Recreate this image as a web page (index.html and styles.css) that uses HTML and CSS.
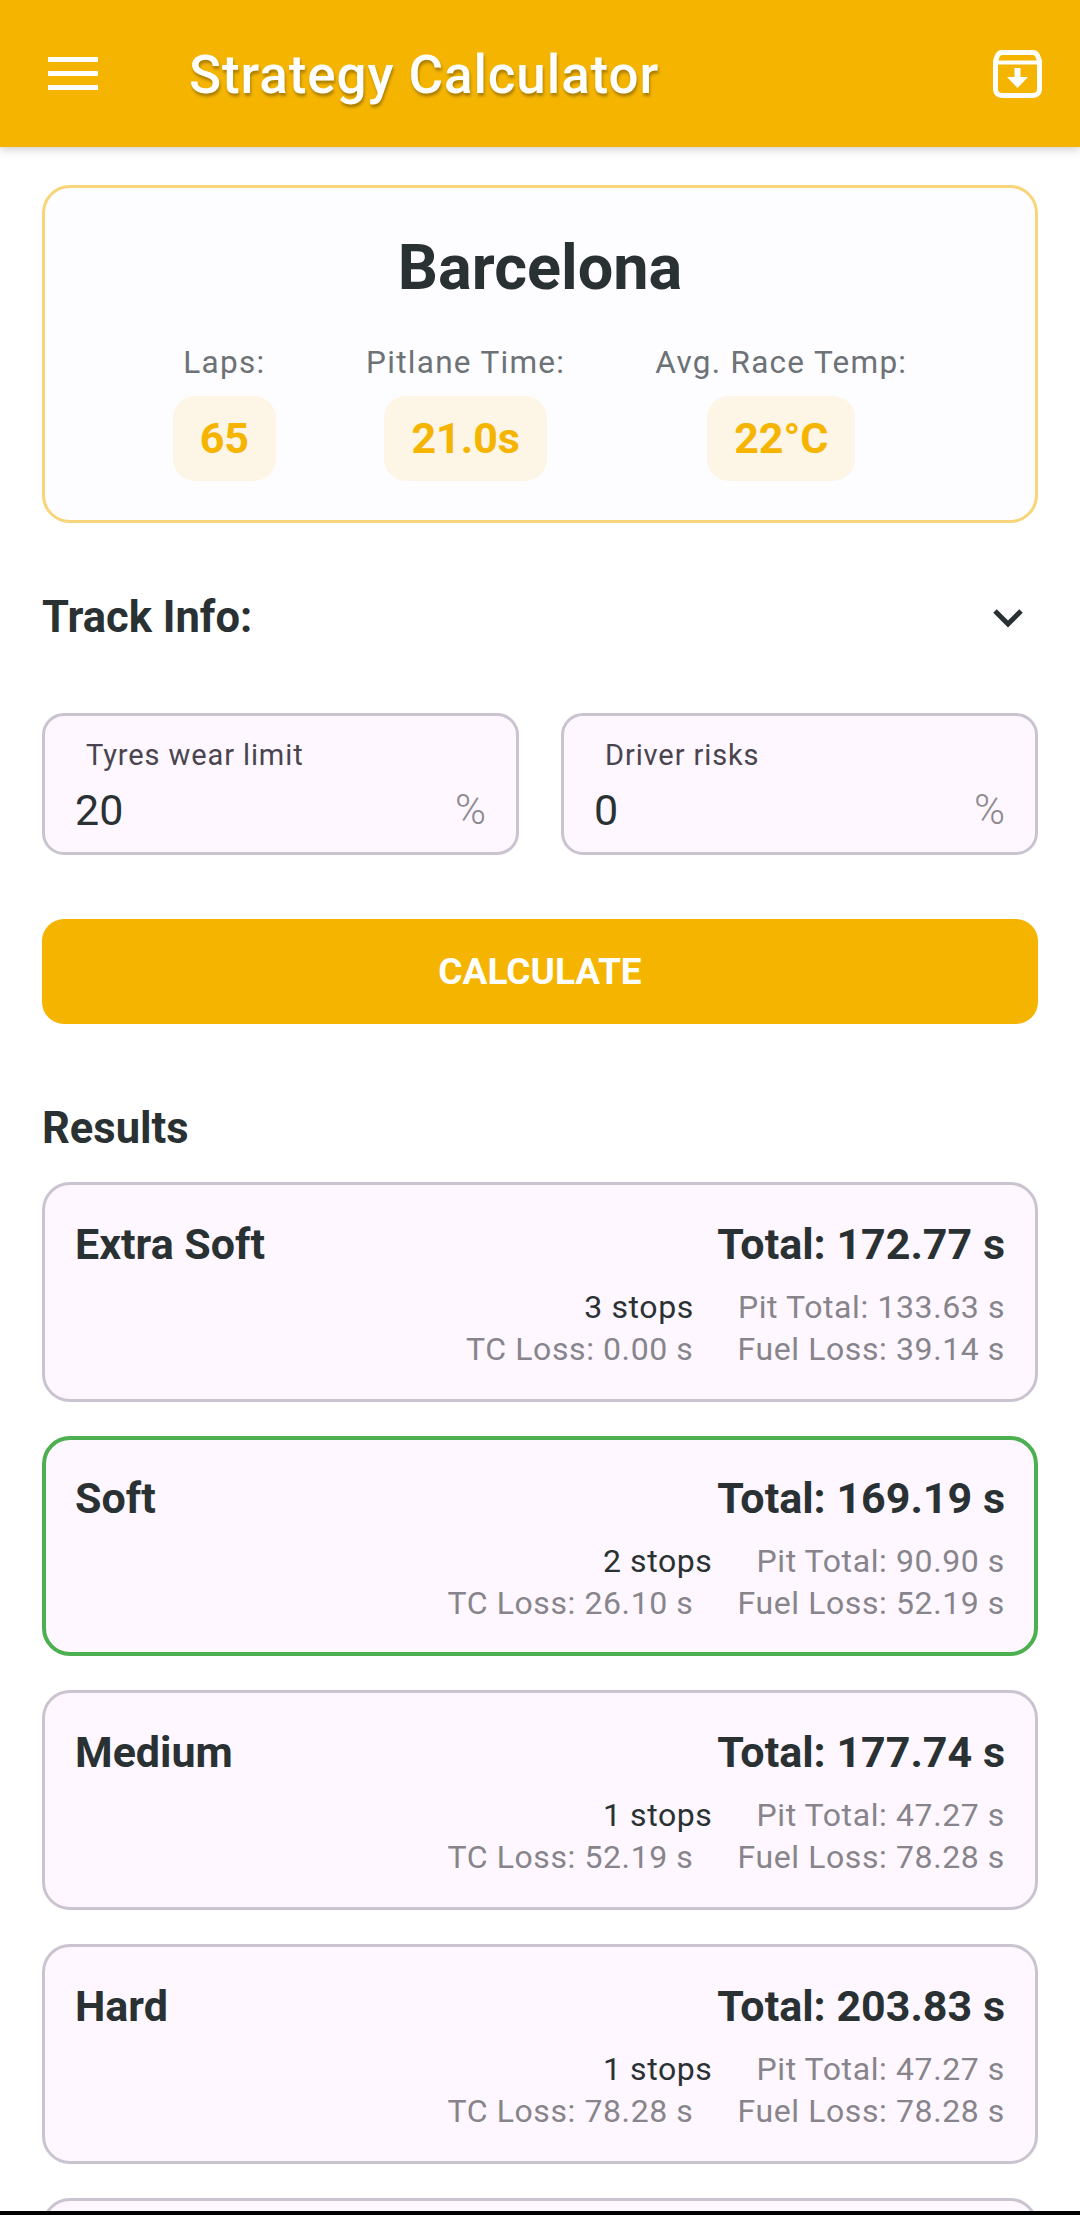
FILE: index.html
```html
<!DOCTYPE html>
<html lang="en">
<head>
    <meta charset="utf-8" />
    <title>Strategy Calculator</title>
    <link rel="stylesheet" href="styles.css">
</head>
<body>
    <div class="screen">
        <header class="appBar">
            <svg class="menuIcon" width="50" height="33" viewBox="0 0 50 33">
                <rect x="0" y="0" width="50" height="5" fill="#fff"/>
                <rect x="0" y="14" width="50" height="5" fill="#fff"/>
                <rect x="0" y="28" width="50" height="5" fill="#fff"/>
            </svg>
            <h1 class="appTitle">Strategy Calculator</h1>
            <svg class="archiveIcon" width="49" height="48" viewBox="0 0 49 48">
                <path d="M9 2.5H40C42 2.5 43.5 3.5 44.5 5.5L46.5 11V39C46.5 43 44 45.5 40 45.5H9C5 45.5 2.5 43 2.5 39V11L4.5 5.5C5.5 3.5 7 2.5 9 2.5Z" fill="none" stroke="#fff" stroke-width="5"/>
                <path d="M3 12.5H46" stroke="#fff" stroke-width="4"/>
                <path d="M21.5 18H27.5V27H35L24.500 38L14 27H21.500Z" fill="#fff"/>
            </svg>
        </header>

        <main class="content">
            <section class="trackCard">
                <h2 class="trackName">Barcelona</h2>
                <div class="trackStats">
                    <div class="stat">
                        <span class="statLabel">Laps:</span>
                        <span class="statChip">65</span>
                    </div>
                    <div class="stat">
                        <span class="statLabel">Pitlane Time:</span>
                        <span class="statChip">21.0s</span>
                    </div>
                    <div class="stat">
                        <span class="statLabel">Avg. Race Temp:</span>
                        <span class="statChip">22°C</span>
                    </div>
                </div>
            </section>

            <div class="trackInfo">
                <span class="sectionTitle">Track Info:</span>
                <svg class="chevron" width="32" height="20" viewBox="0 0 32 20">
                    <path d="M3 3L16 16L29 3" fill="none" stroke="#2a3133" stroke-width="5"/>
                </svg>
            </div>

            <div class="inputRow">
                <div class="inputBox">
                    <span class="inputLabel">Tyres wear limit</span>
                    <div class="inputLine"><span class="inputValue">20</span><span class="inputUnit">%</span></div>
                </div>
                <div class="inputBox">
                    <span class="inputLabel">Driver risks</span>
                    <div class="inputLine"><span class="inputValue">0</span><span class="inputUnit">%</span></div>
                </div>
            </div>

            <button class="calcButton">CALCULATE</button>

            <h3 class="resultsTitle">Results</h3>

            <div class="results">
                <div class="resultCard">
                    <div class="resultTop"><span>Extra Soft</span><span>Total: 172.77 s</span></div>
                    <div class="resultRow"><span class="stops">3 stops</span><span>Pit Total: 133.63 s</span></div>
                    <div class="resultRow"><span>TC Loss: 0.00 s</span><span>Fuel Loss: 39.14 s</span></div>
                </div>
                <div class="resultCard best">
                    <div class="resultTop"><span>Soft</span><span>Total: 169.19 s</span></div>
                    <div class="resultRow"><span class="stops">2 stops</span><span>Pit Total: 90.90 s</span></div>
                    <div class="resultRow"><span>TC Loss: 26.10 s</span><span>Fuel Loss: 52.19 s</span></div>
                </div>
                <div class="resultCard">
                    <div class="resultTop"><span>Medium</span><span>Total: 177.74 s</span></div>
                    <div class="resultRow"><span class="stops">1 stops</span><span>Pit Total: 47.27 s</span></div>
                    <div class="resultRow"><span>TC Loss: 52.19 s</span><span>Fuel Loss: 78.28 s</span></div>
                </div>
                <div class="resultCard">
                    <div class="resultTop"><span>Hard</span><span>Total: 203.83 s</span></div>
                    <div class="resultRow"><span class="stops">1 stops</span><span>Pit Total: 47.27 s</span></div>
                    <div class="resultRow"><span>TC Loss: 78.28 s</span><span>Fuel Loss: 78.28 s</span></div>
                </div>
                <div class="resultCard"></div>
            </div>
        </main>

        <div class="navBar"></div>
    </div>
</body>
</html>
```

FILE: styles.css
```css
* {
    box-sizing: border-box;
}

body {
    margin: 0;
    background: #fff;
    font-family: Roboto, "Liberation Sans", sans-serif;
    color: #2a3133;
}

.screen {
    display: flex;
    flex-direction: column;
    width: 1080px;
    height: 2215px;
    overflow: hidden;
}

.appBar {
    flex: none;
    display: flex;
    align-items: center;
    height: 147px;
    padding: 0 38px 0 48px;
    background: #f4b400;
    box-shadow: 0 3px 8px rgba(0, 0, 0, 0.18);
    position: relative;
}

.appTitle {
    flex: 1;
    margin: 2px 0 0 91px;
    font-size: 53px;
    font-weight: 500;
    letter-spacing: 0.9px;
    color: #fff;
    text-shadow: 1px 3px 3px rgba(0, 0, 0, 0.3);
}

.menuIcon {
    flex: none;
}

.archiveIcon {
    flex: none;
}

.content {
    flex: 1;
    min-height: 0;
    overflow: hidden;
    padding: 38px 42px 0;
}

.trackCard {
    height: 338px;
    padding-top: 44px;
    border: 3px solid #f8d57a;
    border-radius: 28px;
    background: #fdfcff;
    text-align: center;
}

.trackName {
    margin: 0;
    font-size: 63px;
    font-weight: 700;
    line-height: 72px;
}

.trackStats {
    display: flex;
    justify-content: center;
    gap: 90px;
    margin-top: 40px;
}

.stat {
    display: flex;
    flex-direction: column;
    align-items: center;
    gap: 14px;
}

.statLabel {
    font-size: 31.5px;
    line-height: 38px;
    letter-spacing: 1.3px;
    color: #6c7275;
}

.statChip {
    padding: 0 27px;
    height: 85px;
    line-height: 85px;
    border-radius: 22px;
    background: #fdf5e6;
    color: #f4b400;
    font-size: 43px;
    font-weight: 700;
}

.trackInfo {
    display: flex;
    justify-content: space-between;
    align-items: center;
    height: 189px;
    padding-right: 14px;
}

.sectionTitle {
    font-size: 43.5px;
    font-weight: 700;
}

.inputRow {
    display: flex;
    gap: 42px;
    margin-top: 1px;
}

.inputBox {
    flex: 1;
    height: 142px;
    padding: 22px 30px 0;
    border: 3px solid #cac4d0;
    border-radius: 22px;
    background: #fef7ff;
}

.inputLabel {
    display: block;
    padding-left: 11px;
    font-size: 29px;
    line-height: 34px;
    letter-spacing: 0.9px;
    color: #49454f;
}

.inputLine {
    display: flex;
    justify-content: space-between;
    align-items: center;
    margin-top: 13px;
}

.inputValue {
    font-size: 43px;
    line-height: 50px;
}

.inputUnit {
    font-size: 42px;
    font-weight: 300;
    line-height: 50px;
    color: #8d8a91;
}

.calcButton {
    display: block;
    width: 100%;
    height: 105px;
    margin-top: 64px;
    border: 0;
    border-radius: 22px;
    background: #f4b400;
    color: #fff;
    font-family: inherit;
    font-size: 37px;
    font-weight: 700;
}

.resultsTitle {
    margin: 82px 0 0;
    font-size: 43.5px;
    font-weight: 700;
    line-height: 46px;
}

.results {
    display: flex;
    flex-direction: column;
    gap: 34px;
    margin-top: 30px;
}

.resultCard {
    flex: none;
    height: 220px;
    padding: 35px 30px 0;
    border: 3px solid #cac4d0;
    border-radius: 28px;
    background: #fef7ff;
}

.best {
    border: 4px solid #4caf50;
    padding: 34px 29px 0;
}

.resultTop {
    display: flex;
    justify-content: space-between;
    margin-bottom: 18px;
    font-size: 43px;
    font-weight: 700;
    line-height: 48px;
}

.resultRow {
    display: flex;
    justify-content: flex-end;
    font-size: 32px;
    line-height: 42px;
    letter-spacing: 0.6px;
    color: #87858b;
}

.resultRow > span:first-child {
    margin-right: 44px;
}

.stops {
    color: #2a3133;
}

.navBar {
    flex: none;
    height: 4px;
    background: #000;
}
```
